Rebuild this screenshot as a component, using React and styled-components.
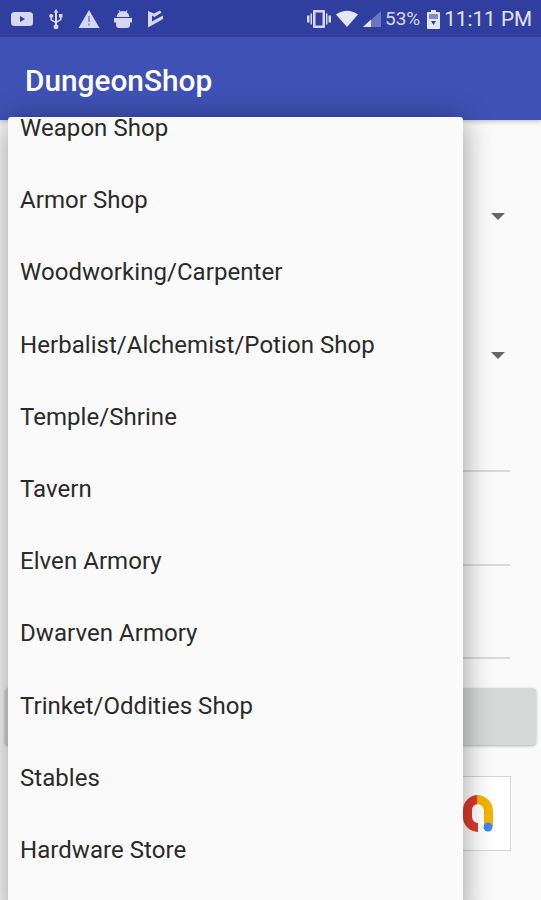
import styled, { createGlobalStyle } from "styled-components";

const shops = [
  "Weapon Shop",
  "Armor Shop",
  "Woodworking/Carpenter",
  "Herbalist/Alchemist/Potion Shop",
  "Temple/Shrine",
  "Tavern",
  "Elven Armory",
  "Dwarven Armory",
  "Trinket/Oddities Shop",
  "Stables",
  "Hardware Store",
];

const App = () => {
  return (
    <Screen>
      <GlobalStyle />
      <StatusBar>
        <StatusIcons>
          <svg width="24" height="18" viewBox="0 0 24 18">
            <rect x="1" y="2" width="22" height="14" rx="3.5" fill="#d5d8ee" />
            <path d="M10 6l5 3-5 3z" fill="#303f9f" />
          </svg>
          <svg width="18" height="22" viewBox="0 0 18 22">
            <path
              d="M9 1l2.400 3.400H10V13l3-1.800V9.500h-1V6h3.500v3.500h-1v2.500L10 14.800V16.500a2.500 2.500 0 1 1-2 0V15L3.500 12.200V9.800a2 2 0 1 1 1.500 0v1.700L8 13.300V4.400H6.600z"
              fill="#d5d8ee"
            />
          </svg>
          <svg width="22" height="20" viewBox="0 0 22 20">
            <path d="M11 1l10.500 18H.5z" fill="#d5d8ee" />
            <path d="M10 7h2v6h-2zM10 14.500h2v2h-2z" fill="#8f97ca" />
          </svg>
          <svg width="20" height="20" viewBox="0 0 20 20">
            <path
              d="M3.500 8a6.500 6.500 0 0 1 3-5L5.500 1.500l.6-.5 1.300 1.500a6.500 6.500 0 0 1 5.200 0L13.900 1l.6.500L13.500 3a6.500 6.500 0 0 1 3 5zM1 9h18v4.500H17V16a3 3 0 0 1-3 3H6a3 3 0 0 1-3-3v-2.500H1z"
              fill="#d5d8ee"
            />
          </svg>
          <svg width="20" height="20" viewBox="0 0 20 20">
            <path
              d="M2 2l6 2.500L14 1.500l1.500 2L8.500 8 6 6.500V12.500l11-6V10L2 18.500z"
              fill="#d5d8ee"
            />
          </svg>
        </StatusIcons>
        <StatusIcons $tight>
          <svg width="26" height="20" viewBox="0 0 26 20">
            <path d="M8 1h10a1 1 0 0 1 1 1v16a1 1 0 0 1-1 1H8a1 1 0 0 1-1-1V2a1 1 0 0 1 1-1z" fill="#d5d8ee" />
            <rect x="9.500" y="3.500" width="7" height="13" fill="#303f9f" />
            <path d="M1 6.500h2.500v7H1zM4.500 4.500H6v11H4.500zM22.500 6.500H25v7h-2.500zM20 4.500h1.500v11H20z" fill="#d5d8ee" />
          </svg>
          <svg width="24" height="18" viewBox="0 0 24 18">
            <path d="M12 17L1 4.500Q12-3 23 4.500z" fill="#e4e6f4" />
          </svg>
          <svg width="20" height="18" viewBox="0 0 20 18">
            <path d="M19 1v16H1z" fill="#6c78bd" />
            <path d="M9 9.500V17H1z" fill="#e4e6f4" />
          </svg>
          <StatusText>53%</StatusText>
          <svg width="15" height="20" viewBox="0 0 15 20">
            <path d="M5 1h5v2h3a1 1 0 0 1 1 1v15a1 1 0 0 1-1 1H2a1 1 0 0 1-1-1V4a1 1 0 0 1 1-1h3z" fill="#e4e6f4" />
            <path d="M3 5h9v5H3z" fill="#7f8ac6" />
            <path d="M5 12h5l-2.500 4z" fill="#303f9f" />
          </svg>
          <Clock>11:11 PM</Clock>
        </StatusIcons>
      </StatusBar>
      <AppBar>
        <Title>DungeonShop</Title>
      </AppBar>
      <Form>
        <SpinnerRow $height={140}>
          <Caret />
        </SpinnerRow>
        <SpinnerRow $height={139}>
          <Caret />
        </SpinnerRow>
        <InputRow $top={71} />
        <InputRow $top={92} />
        <InputRow $top={91} />
        <SubmitButton />
        <AdBox>
          <svg width="36" height="42" viewBox="0 0 36 42">
            <path d="M20 6.500A10.500 10.500 0 0 0 9.500 17V24A10.500 10.500 0 0 0 20 34.500" fill="none" stroke="#dc3b2c" strokeWidth="9" />
            <path d="M19 6.500A11.500 11.500 0 0 1 30.500 18V34" fill="none" stroke="#f5b400" strokeWidth="9" />
            <circle cx="30" cy="34" r="4.500" fill="#4285f4" />
          </svg>
        </AdBox>
      </Form>
      <Menu>
        <MenuList>
          {shops.map((shop) => (
            <MenuItem key={shop}>{shop}</MenuItem>
          ))}
        </MenuList>
      </Menu>
    </Screen>
  );
};

const GlobalStyle = createGlobalStyle`
  html, body {
    margin: 0;
    background: #fafafa;
  }
`;

const Screen = styled.div`
  position: relative;
  width: 541px;
  height: 900px;
  overflow: hidden;
  background: #fafafa;
  font-family: Roboto, "Liberation Sans", sans-serif;
`;

const StatusBar = styled.div`
  height: 37px;
  display: flex;
  justify-content: space-between;
  align-items: center;
  padding: 0 9px 0 10px;
  background: #303f9f;
`;

const StatusIcons = styled.div`
  display: flex;
  align-items: center;
  gap: ${(p) => (p.$tight ? "3px" : "13px")};
`;

const StatusText = styled.span`
  margin-right: 3px;
  font-size: 19px;
  color: #d5d8ee;
`;

const Clock = styled.span`
  font-size: 20.700px;
  color: #e4e6f4;
`;

const AppBar = styled.header`
  height: 83px;
  display: flex;
  align-items: center;
  padding: 4px 0 0 25px;
  box-sizing: border-box;
  background: #3f51b5;
  box-shadow: 0 2px 4px rgba(0, 0, 0, 0.2);
`;

const Title = styled.h1`
  margin: 0;
  font-size: 29.800px;
  font-weight: 500;
  color: #fff;
`;

const Form = styled.main`
  display: flex;
  flex-direction: column;
  align-items: flex-end;
`;

const SpinnerRow = styled.div`
  height: ${(p) => p.$height}px;
  width: 100%;
  display: flex;
  justify-content: flex-end;
  align-items: flex-end;
  padding-right: 36px;
  box-sizing: border-box;
`;

const Caret = styled.div`
  width: 0;
  height: 0;
  margin-bottom: 40px;
  border-left: 7px solid transparent;
  border-right: 7px solid transparent;
  border-top: 7px solid #666;
`;

const InputRow = styled.div`
  width: 400px;
  margin-top: ${(p) => p.$top}px;
  margin-right: 31px;
  border-bottom: 2px solid #d9d9d9;
`;

const SubmitButton = styled.div`
  align-self: center;
  width: 531px;
  height: 57px;
  margin-top: 29px;
  border-radius: 4px;
  background: #d6d7d7;
  box-shadow: 0 1px 3px rgba(0, 0, 0, 0.3);
`;

const AdBox = styled.div`
  width: 120px;
  height: 75px;
  margin-top: 31px;
  margin-right: 30px;
  display: flex;
  justify-content: flex-end;
  align-items: center;
  padding-right: 16px;
  box-sizing: border-box;
  border: 1px solid #d4d4d4;
  background: #fff;
`;

const Menu = styled.div`
  position: absolute;
  left: 8px;
  top: 117px;
  width: 455px;
  height: 800px;
  overflow: hidden;
  border-radius: 3px;
  background: #fafafa;
  box-shadow: 0 4px 30px rgba(0, 0, 0, 0.4);
`;

const MenuList = styled.div`
  margin-top: -25px;
`;

const MenuItem = styled.div`
  height: 72.200px;
  display: flex;
  align-items: center;
  padding-left: 12px;
  font-size: 24px;
  letter-spacing: 0.05px;
  color: #2a2a2a;
`;

export default App;
